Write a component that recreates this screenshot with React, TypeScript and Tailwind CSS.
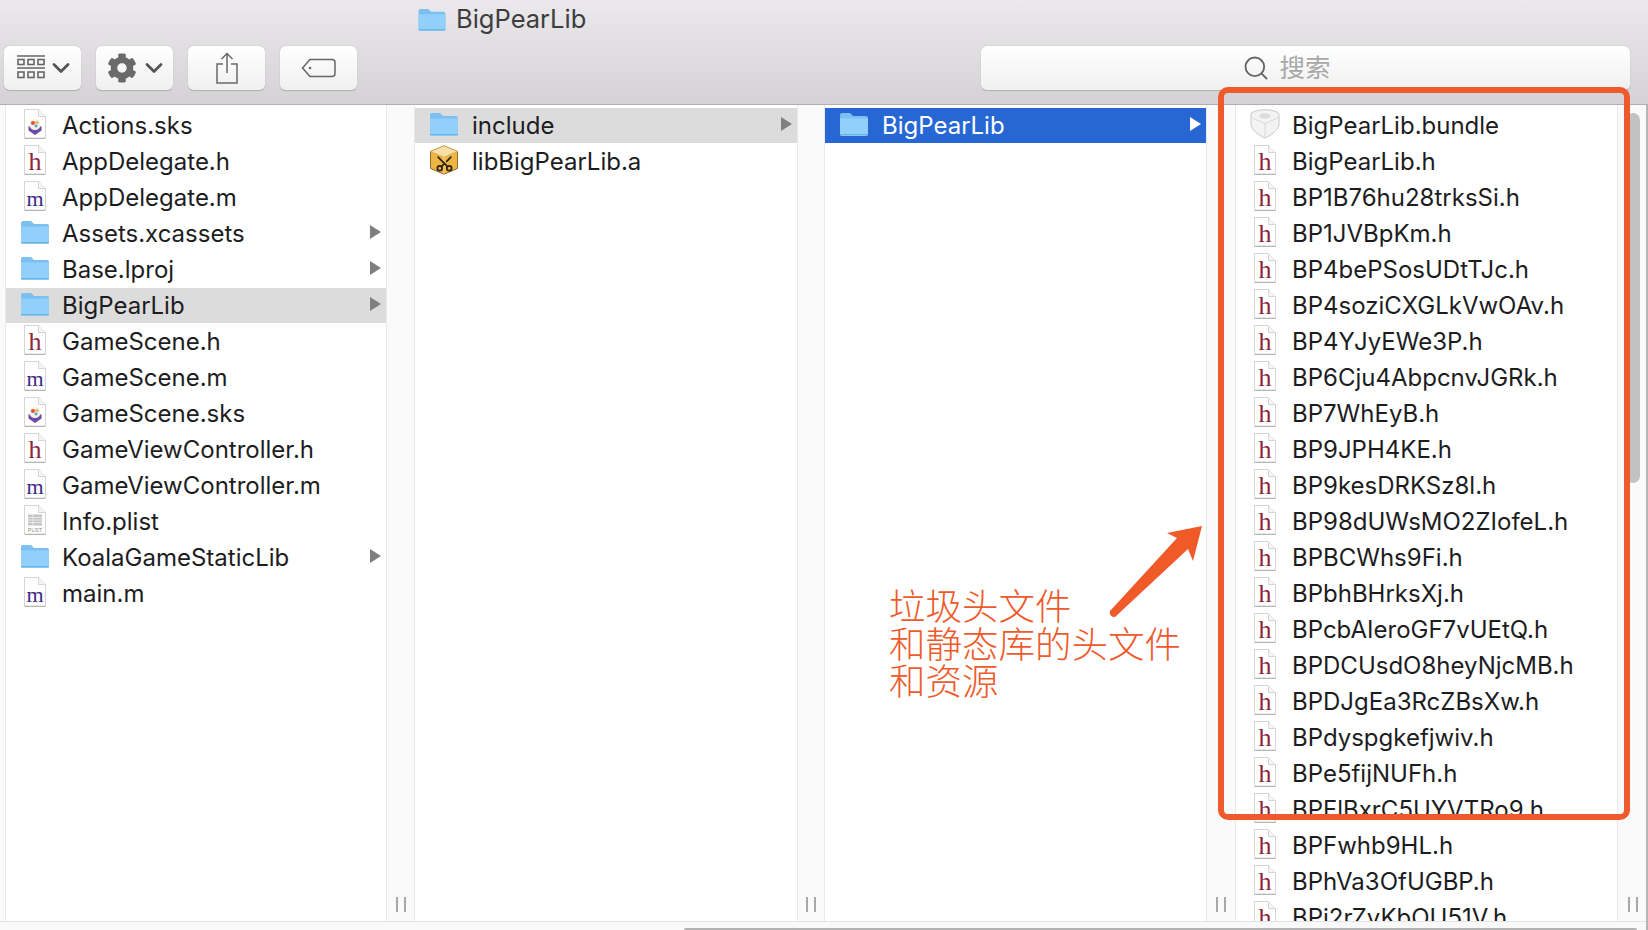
import { ChevronDown, Scissors, Search } from 'lucide-react';
import { FaCog } from 'react-icons/fa';

type Kind = 'h' | 'm' | 'folder' | 'sks' | 'plist' | 'archive' | 'bundle';
type Entry = { name: string; kind: Kind; active?: boolean; selected?: boolean };

const col1: Entry[] = [
  { name: 'Actions.sks', kind: 'sks' },
  { name: 'AppDelegate.h', kind: 'h' },
  { name: 'AppDelegate.m', kind: 'm' },
  { name: 'Assets.xcassets', kind: 'folder' },
  { name: 'Base.lproj', kind: 'folder' },
  { name: 'BigPearLib', kind: 'folder', active: true },
  { name: 'GameScene.h', kind: 'h' },
  { name: 'GameScene.m', kind: 'm' },
  { name: 'GameScene.sks', kind: 'sks' },
  { name: 'GameViewController.h', kind: 'h' },
  { name: 'GameViewController.m', kind: 'm' },
  { name: 'Info.plist', kind: 'plist' },
  { name: 'KoalaGameStaticLib', kind: 'folder' },
  { name: 'main.m', kind: 'm' },
];

const col2: Entry[] = [
  { name: 'include', kind: 'folder', active: true },
  { name: 'libBigPearLib.a', kind: 'archive' },
];

const col3: Entry[] = [{ name: 'BigPearLib', kind: 'folder', selected: true }];

const headers = [
  'BigPearLib.h',
  'BP1B76hu28trksSi.h',
  'BP1JVBpKm.h',
  'BP4bePSosUDtTJc.h',
  'BP4soziCXGLkVwOAv.h',
  'BP4YJyEWe3P.h',
  'BP6Cju4AbpcnvJGRk.h',
  'BP7WhEyB.h',
  'BP9JPH4KE.h',
  'BP9kesDRKSz8l.h',
  'BP98dUWsMO2ZIofeL.h',
  'BPBCWhs9Fi.h',
  'BPbhBHrksXj.h',
  'BPcbAIeroGF7vUEtQ.h',
  'BPDCUsdO8heyNjcMB.h',
  'BPDJgEa3RcZBsXw.h',
  'BPdyspgkefjwiv.h',
  'BPe5fijNUFh.h',
  'BPFlBxrC5UYVTRo9.h',
  'BPFwhb9HL.h',
  'BPhVa3OfUGBP.h',
  'BPi2rZvKbOU51V.h',
];

const col4: Entry[] = [
  { name: 'BigPearLib.bundle', kind: 'bundle' },
  ...headers.map((name): Entry => ({ name, kind: 'h' })),
];

function FolderIcon({ className }: { className?: string }) {
  return (
    <svg viewBox="0 0 30 24" className={className}>
      <path d="M1 3a2 2 0 012-2h8l3 3h13a2 2 0 012 2v16a2 2 0 01-2 2H3a2 2 0 01-2-2z" fill="#7cc0f2" />
      <path d="M1 6.500h28V22a1.600 1.600 0 01-1.600 1.600H2.600A1.600 1.600 0 011 22z" fill="#92d0fb" />
      <path d="M1 22.600h28" stroke="#69b0e4" strokeWidth="1" />
    </svg>
  );
}

function Page({ children }: { children?: React.ReactNode }) {
  return (
    <svg viewBox="0 0 30 30" className="h-[30px] w-[30px]">
      <path d="M4.500 .5h14l7 7v21.500h-21z" fill="#fff" stroke="#d4d4d4" />
      <path d="M18.500 .5v7h7" fill="#f4f4f4" stroke="#d4d4d4" />
      <path d="M4.500 29.500h21" stroke="#b4b4b4" />
      {children}
    </svg>
  );
}

function FileIcon({ kind }: { kind: Kind }) {
  if (kind === 'folder') return <FolderIcon className="h-[24px] w-[30px]" />;
  if (kind === 'h' || kind === 'm') {
    return (
      <Page>
        <text
          x="15"
          y="25"
          textAnchor="middle"
          fontSize={kind === 'h' ? 26 : 22}
          fontFamily="'Liberation Serif', serif"
          fill={kind === 'h' ? '#8e2438' : '#3e2a86'}
        >
          {kind}
        </text>
      </Page>
    );
  }
  if (kind === 'sks') {
    return (
      <Page>
        <path d="M8.500 17l6.500 3.500 6.500-3.500v4.500L15 26l-6.500-4.500z" fill="#6c4aa8" />
        <circle cx="15" cy="15.500" r="5.500" fill="#f3efe2" />
        <circle cx="13" cy="14" r="2" fill="#e2503c" />
        <circle cx="17" cy="13.500" r="1.600" fill="#edb532" />
        <circle cx="16" cy="17" r="1.400" fill="#4f9fd8" />
      </Page>
    );
  }
  if (kind === 'plist') {
    return (
      <Page>
        <path d="M8 9.500h14v11H8z" fill="#c4c4c4" />
        <path d="M8 12.500h14M8 15h14M8 17.500h14M13 9.500v11" stroke="#f2f2f2" strokeWidth=".8" />
        <text x="15" y="27" textAnchor="middle" fontSize="5" fontFamily="'Liberation Sans', sans-serif" fill="#8a8a8a">
          PLIST
        </text>
      </Page>
    );
  }
  if (kind === 'archive') {
    return (
      <div className="relative h-[30px] w-[30px]">
        <svg viewBox="0 0 30 30" className="h-[30px] w-[30px]">
          <path d="M15 .8l13.500 5.700v17L15 29.200 1.500 23.500v-17z" fill="#eeb543" stroke="#8d6b32" />
          <path d="M15 .8l13.500 5.700L15 12.200 1.500 6.500z" fill="#f8e0a4" stroke="#c99f50" strokeWidth=".6" />
          <path d="M15 12.200v17" stroke="#f6d180" strokeWidth=".8" />
        </svg>
        <Scissors className="absolute left-[6px] top-[9px] h-[19px] w-[19px] -rotate-90 text-[#2d2414]" strokeWidth={2.2} />
      </div>
    );
  }
  return (
    <svg viewBox="0 0 30 30" className="h-[30px] w-[30px]">
      <path d="M15 .8C8 .8 3 2.500 1 4.500v12c1.500 5 9 10.500 14 12.700 5-2.200 12.500-7.700 14-12.700v-12C27 2.500 22 .8 15 .8z" fill="#f3f3f3" stroke="#c8c8c8" />
      <path d="M1.500 8c4 3 9 4.500 13.500 6.500v14.500" fill="none" stroke="#dadada" />
      <path d="M28.500 8c-4 3-9 4.500-13.500 6.500" fill="none" stroke="#dadada" />
      <ellipse cx="15" cy="7" rx="5.500" ry="2.800" fill="#dcdcdc" />
    </svg>
  );
}

function Row({ entry, textGap }: { entry: Entry; textGap: string }) {
  const bg = entry.selected ? 'bg-[#2767d4] text-white' : entry.active ? 'bg-[#dcdcdc] text-[#1d1d1f]' : 'text-[#1d1d1f]';
  return (
    <div className={`mb-px flex h-[35px] items-center pl-[14px] pr-[5px] ${bg}`}>
      <div className="-mt-[3px] flex h-[30px] w-[30px] shrink-0 items-center justify-center">
        <FileIcon kind={entry.kind} />
      </div>
      <span className={`flex-1 whitespace-nowrap text-[24px] leading-none ${textGap}`}>{entry.name}</span>
      {entry.kind === 'folder' && (
        <div
          className={`-mt-[3px] h-0 w-0 border-y-[7px] border-l-[11px] border-y-transparent ${
            entry.selected ? 'border-l-white' : 'border-l-[#7f7f7f]'
          }`}
        />
      )}
    </div>
  );
}

function Divider({ width }: { width: string }) {
  return (
    <div className={`flex shrink-0 items-end justify-center gap-[6px] border-x border-[#e9e9e9] bg-[#fafafa] pb-[9px] ${width}`}>
      <div className="h-[15px] w-[2px] bg-[#a8a8a8]" />
      <div className="h-[15px] w-[2px] bg-[#a8a8a8]" />
    </div>
  );
}

function Column({ entries, width, textGap = 'ml-[12px]' }: { entries: Entry[]; width: string; textGap?: string }) {
  return (
    <div className={`shrink-0 overflow-hidden bg-white pt-[3px] ${width}`}>
      {entries.map((entry) => (
        <Row key={entry.name} entry={entry} textGap={textGap} />
      ))}
    </div>
  );
}

function ToolButton({ children, className = '' }: { children: React.ReactNode; className?: string }) {
  return (
    <div className={`flex h-[45px] w-[77px] items-center justify-center rounded-[6px] border-b border-[#b4b4b4] bg-gradient-to-b from-white to-[#f0f0f0] text-[#6a6a6a] shadow-[0_0_1px_rgba(0,0,0,0.3)] ${className}`}>
      {children}
    </div>
  );
}

export default function App() {
  return (
    <div className="relative flex h-[930px] w-[1648px] flex-col overflow-hidden bg-white font-['Inter','Noto_Sans_CJK_SC',sans-serif]">
      {/* Toolbar */}
      <div className="h-[105px] shrink-0 border-b border-[#b0b0b0] bg-gradient-to-b from-[#ebe9eb] to-[#d4d2d4]">
        <div className="flex h-[38px] items-center pl-[417px]">
          <FolderIcon className="h-[23px] w-[30px]" />
          <span className="ml-[9px] text-[25.500px] leading-none text-[#3d3d3f]">BigPearLib</span>
        </div>
        <div className="mt-[8px] flex pl-[4px] pr-[18px]">
          <ToolButton className="pl-[5px]">
            <svg viewBox="0 0 30 26" className="h-[26px] w-[30px] shrink-0" fill="none" stroke="#666" strokeWidth="1.600">
              <path d="M1 1h28M1 13h28" strokeWidth="1.400" />
              <rect x="2" y="4.500" width="6" height="5" />
              <rect x="12" y="4.500" width="6" height="5" />
              <rect x="22" y="4.500" width="6" height="5" />
              <rect x="2" y="17" width="6" height="5.500" />
              <rect x="12" y="17" width="6" height="5.500" />
              <rect x="22" y="17" width="6" height="5.500" />
            </svg>
            <ChevronDown className="ml-[1px] h-[28px] w-[28px] shrink-0 text-[#555]" strokeWidth={2.4} />
          </ToolButton>
          <div className="ml-[15px]">
            <ToolButton className="pl-[5px]">
              <FaCog className="h-[30px] w-[30px] shrink-0" />
              <ChevronDown className="ml-[3px] h-[28px] w-[28px] shrink-0 text-[#555]" strokeWidth={2.4} />
            </ToolButton>
          </div>
          <div className="ml-[15px]">
            <ToolButton>
              <svg viewBox="0 0 24 32" className="h-[32px] w-[24px]" fill="none" stroke="#6a6a6a" strokeWidth="1.500">
                <path d="M8 12H2v19h20V12h-6" />
                <path d="M12 21V1.500M6.500 7L12 1.500 17.500 7" />
              </svg>
            </ToolButton>
          </div>
          <div className="ml-[15px]">
            <ToolButton>
              <svg viewBox="0 0 36 20" className="h-[20px] w-[36px]" fill="none" stroke="#666" strokeWidth="1.500">
                <path d="M9 1.500h22a3 3 0 013 3v11a3 3 0 01-3 3H9l-7.500-8.500z" />
                <circle cx="9" cy="10" r="1.300" fill="#666" stroke="none" />
              </svg>
            </ToolButton>
          </div>
          <div className="ml-[624px] flex h-[45px] flex-1 items-center justify-center rounded-[6px] border-b border-[#b4b4b4] bg-gradient-to-b from-white to-[#f0f0f0] pr-[38px] shadow-[0_0_1px_rgba(0,0,0,0.3)]">
            <Search className="h-[28px] w-[28px] text-[#666]" strokeWidth={1.6} />
            <span className="ml-[9px] text-[25.500px] leading-none text-[#a8a8a8]">搜索</span>
          </div>
        </div>
      </div>

      {/* Column browser */}
      <div className="flex min-h-0 flex-1">
        <div className="w-[6px] shrink-0 border-r border-[#e9e9e9] bg-[#fafafa]" />
        <Column entries={col1} width="w-[380px]" />
        <Divider width="w-[29px]" />
        <Column entries={col2} width="w-[382px]" textGap="ml-[13px]" />
        <Divider width="w-[28px]" />
        <Column entries={col3} width="w-[381px]" textGap="ml-[13px]" />
        <Divider width="w-[30px]" />
        <Column entries={col4} width="w-[381px]" />
        <Divider width="w-[31px]" />
      </div>
      <div className="relative h-[9px] shrink-0 border-t border-[#e4e4e4] bg-[#f9f9f9]" />

      {/* Scrollbars */}
      <div className="absolute left-[1626px] top-[113px] h-[370px] w-[14px] rounded-[7px] bg-[#c2c2c2]" />
      <div className="absolute bottom-0 left-[684px] h-[2px] w-[953px] rounded-t-[2px] bg-[#b2b2b2]" />
      <div className="absolute right-0 top-[105px] h-[825px] w-[2px] bg-[#b5b5b5]" />

      {/* Annotation */}
      <div className="absolute left-[1218px] top-[87px] h-[733px] w-[412px] rounded-[10px] border-[6px] border-[#ee5a2b]" />
      <svg viewBox="0 0 110 110" className="absolute left-[1105px] top-[520px] h-[110px] w-[110px]">
        <path d="M97 6L62 13l10 5L5 91q-1 6 5 6l73-68 5 12z" fill="#f05a28" />
      </svg>
      <div className="absolute left-[889px] top-[589px] text-[36.500px] font-light leading-[37.500px] text-[#ee5a2b]">
        <div>垃圾头文件</div>
        <div>和静态库的头文件</div>
        <div>和资源</div>
      </div>
    </div>
  );
}
